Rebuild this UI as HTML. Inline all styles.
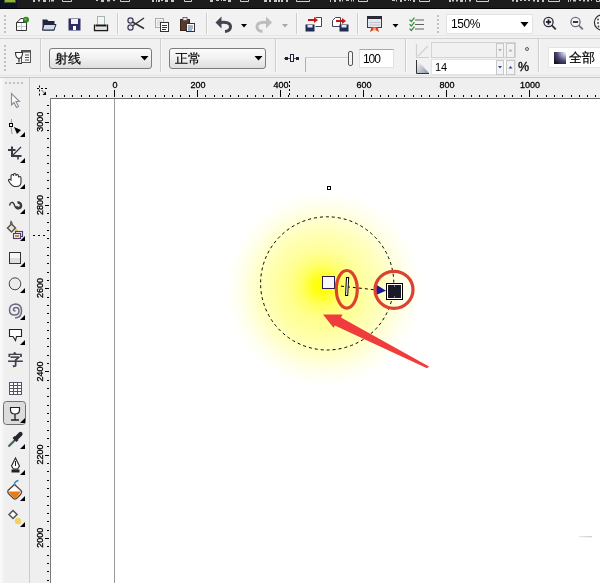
<!DOCTYPE html>
<html><head><meta charset="utf-8"><style>
*{margin:0;padding:0;box-sizing:border-box}
html,body{width:600px;height:583px;overflow:hidden;background:#fff;font-family:"Liberation Sans",sans-serif}
.a{position:absolute}
svg{position:absolute;left:0;top:0}
.a,svg{will-change:transform}
</style></head><body>
<div class="a" style="left:0;top:0;width:600px;height:9px;background:#1c1c1c"></div>
<div class="a" style="left:0;top:9px;width:600px;height:28px;background:#f2f2f2"></div>
<div class="a" style="left:0;top:35px;width:600px;height:1px;background:#e6e6e6"></div>
<div class="a" style="left:0;top:36px;width:600px;height:2px;background:#f1f1f1"></div>
<div class="a" style="left:0;top:38px;width:600px;height:1px;background:#d2d2d2"></div>
<div class="a" style="left:0;top:39px;width:600px;height:38px;background:#f1f1f1"></div>
<div class="a" style="left:0;top:75px;width:600px;height:1px;background:#e4e4e4"></div>
<div class="a" style="left:0;top:77px;width:600px;height:1px;background:#c8c8c8"></div>
<div class="a" style="left:0;top:78px;width:29px;height:505px;background:linear-gradient(90deg,#fbfbfb,#efefef 5px)"></div>
<div class="a" style="left:29px;top:78px;width:1px;height:505px;background:#cbcbcb"></div>
<div class="a" style="left:30px;top:78px;width:570px;height:505px;background:#efefef"></div>
<div class="a" style="left:51px;top:99px;width:549px;height:484px;background:#fff"></div>
<div class="a" style="left:50px;top:98px;width:550px;height:1px;background:#6a6a6a"></div>
<div class="a" style="left:50px;top:98px;width:1px;height:485px;background:#7a7a7a"></div>
<svg width="600" height="9" style="left:0;top:0"><rect x="0" y="0" width="17" height="8" fill="#0e1226"/><rect x="4" y="0" width="12" height="3" fill="#3e5a14"/><rect x="5" y="0" width="10" height="2" fill="#93b43c"/><rect x="33" y="0" width="2" height="2" fill="#c8c8c8"/><rect x="38" y="0" width="2" height="1.5" fill="#c8c8c8"/><rect x="43" y="0" width="3" height="2" fill="#c8c8c8"/><rect x="49" y="0" width="1" height="2" fill="#c8c8c8"/><rect x="51" y="0" width="3" height="1.5" fill="#c8c8c8"/><path d="M62.5,0 V1.5 H71.5 V0" fill="none" stroke="#d0d0d0" stroke-width="1"/><rect x="96" y="0" width="2" height="1" fill="#c8c8c8"/><rect x="101" y="0" width="3" height="2" fill="#c8c8c8"/><rect x="107" y="0" width="3" height="1.5" fill="#c8c8c8"/><rect x="113" y="0" width="2" height="1" fill="#c8c8c8"/><path d="M120.5,0 V1.5 H129.5 V0" fill="none" stroke="#d0d0d0" stroke-width="1"/><rect x="152" y="0" width="2" height="2" fill="#c8c8c8"/><rect x="156" y="0" width="1" height="2" fill="#c8c8c8"/><rect x="158" y="0" width="2" height="2" fill="#c8c8c8"/><rect x="161" y="0" width="2" height="1" fill="#c8c8c8"/><rect x="165" y="0" width="3" height="2" fill="#c8c8c8"/><rect x="171" y="0" width="3" height="2" fill="#c8c8c8"/><path d="M184.5,0 V1.5 H191.5 V0" fill="none" stroke="#d0d0d0" stroke-width="1"/><rect x="210" y="0" width="3" height="2" fill="#c8c8c8"/><rect x="216" y="0" width="3" height="1" fill="#c8c8c8"/><rect x="221" y="0" width="1" height="1" fill="#c8c8c8"/><rect x="223" y="0" width="3" height="1" fill="#c8c8c8"/><rect x="228" y="0" width="3" height="2" fill="#c8c8c8"/><path d="M240.5,0 V1.5 H248.5 V0" fill="none" stroke="#d0d0d0" stroke-width="1"/><rect x="264" y="0" width="3" height="2" fill="#c8c8c8"/><rect x="269" y="0" width="2" height="2" fill="#c8c8c8"/><rect x="274" y="0" width="3" height="2" fill="#c8c8c8"/><rect x="278" y="0" width="2" height="2" fill="#c8c8c8"/><rect x="281" y="0" width="2" height="2" fill="#c8c8c8"/><rect x="286" y="0" width="2" height="2" fill="#c8c8c8"/><path d="M296.5,0 V1.5 H309.5 V0" fill="none" stroke="#d0d0d0" stroke-width="1"/><rect x="330" y="0" width="1" height="2" fill="#c8c8c8"/><rect x="334" y="0" width="2" height="2" fill="#c8c8c8"/><rect x="339" y="0" width="2" height="1.5" fill="#c8c8c8"/><rect x="342" y="0" width="1" height="1.5" fill="#c8c8c8"/><rect x="346" y="0" width="3" height="1" fill="#c8c8c8"/><rect x="351" y="0" width="1" height="1.5" fill="#c8c8c8"/><rect x="353" y="0" width="1" height="1.5" fill="#c8c8c8"/><path d="M358.5,0 V1.5 H367.5 V0" fill="none" stroke="#d0d0d0" stroke-width="1"/><rect x="392" y="0" width="3" height="1" fill="#c8c8c8"/><rect x="396" y="0" width="1" height="1.5" fill="#c8c8c8"/><rect x="400" y="0" width="2" height="2" fill="#c8c8c8"/><rect x="404" y="0" width="2" height="1" fill="#c8c8c8"/><rect x="408" y="0" width="1" height="1" fill="#c8c8c8"/><rect x="410" y="0" width="1" height="1" fill="#c8c8c8"/><rect x="413" y="0" width="2" height="2" fill="#c8c8c8"/><path d="M419.5,0 V1.5 H429.5 V0" fill="none" stroke="#d0d0d0" stroke-width="1"/><rect x="449" y="0" width="2" height="2" fill="#c8c8c8"/><rect x="452" y="0" width="2" height="1.5" fill="#c8c8c8"/><rect x="456" y="0" width="2" height="1.5" fill="#c8c8c8"/><rect x="460" y="0" width="3" height="2" fill="#c8c8c8"/><rect x="465" y="0" width="1" height="2" fill="#c8c8c8"/><rect x="469" y="0" width="2" height="1.5" fill="#c8c8c8"/><path d="M476.5,0 V1.5 H488.5 V0" fill="none" stroke="#d0d0d0" stroke-width="1"/><rect x="512" y="0" width="2" height="1.5" fill="#c8c8c8"/><rect x="516" y="0" width="2" height="2" fill="#c8c8c8"/><rect x="520" y="0" width="2" height="1" fill="#c8c8c8"/><rect x="524" y="0" width="2" height="1" fill="#c8c8c8"/><rect x="528" y="0" width="2" height="1" fill="#c8c8c8"/><rect x="533" y="0" width="2" height="1.5" fill="#c8c8c8"/><rect x="537" y="0" width="2" height="2" fill="#c8c8c8"/><rect x="542" y="0" width="2" height="2" fill="#c8c8c8"/><path d="M548.5,0 V1.5 H559.5 V0" fill="none" stroke="#d0d0d0" stroke-width="1"/><rect x="568" y="0" width="1" height="2" fill="#c8c8c8"/><rect x="570" y="0" width="1" height="1.5" fill="#c8c8c8"/><rect x="573" y="0" width="3" height="1.5" fill="#c8c8c8"/><rect x="579" y="0" width="2" height="1" fill="#c8c8c8"/><rect x="583" y="0" width="2" height="1.5" fill="#c8c8c8"/><rect x="587" y="0" width="2" height="1.5" fill="#c8c8c8"/><rect x="591" y="0" width="1" height="1" fill="#c8c8c8"/><path d="M596.5,0 V1.5 H599.5 V0" fill="none" stroke="#d0d0d0" stroke-width="1"/><rect x="0" y="8" width="600" height="1" fill="#050505"/></svg>
<div class="a" style="left:4px;top:15px;width:2px;height:18px;background:repeating-linear-gradient(#c2c2c2 0 2px,transparent 2px 4px)"></div>
<div class="a" style="left:4px;top:45px;width:2px;height:26px;background:repeating-linear-gradient(#c2c2c2 0 2px,transparent 2px 4px)"></div>
<div class="a" style="left:437px;top:15px;width:2px;height:18px;background:repeating-linear-gradient(#c2c2c2 0 2px,transparent 2px 4px)"></div>
<div class="a" style="left:5px;top:82px;width:20px;height:2px;background:repeating-linear-gradient(90deg,#c2c2c2 0 2px,transparent 2px 4px)"></div>
<div class="a" style="left:117px;top:13px;width:1px;height:21px;background:#cdcdcd"></div>
<div class="a" style="left:118px;top:13px;width:1px;height:21px;background:#fbfbfb"></div>
<div class="a" style="left:206px;top:13px;width:1px;height:21px;background:#cdcdcd"></div>
<div class="a" style="left:207px;top:13px;width:1px;height:21px;background:#fbfbfb"></div>
<div class="a" style="left:296px;top:13px;width:1px;height:21px;background:#cdcdcd"></div>
<div class="a" style="left:297px;top:13px;width:1px;height:21px;background:#fbfbfb"></div>
<div class="a" style="left:357px;top:13px;width:1px;height:21px;background:#cdcdcd"></div>
<div class="a" style="left:358px;top:13px;width:1px;height:21px;background:#fbfbfb"></div>
<div class="a" style="left:40px;top:39px;width:1px;height:33px;background:#cdcdcd"></div>
<div class="a" style="left:41px;top:39px;width:1px;height:33px;background:#fbfbfb"></div>
<div class="a" style="left:160px;top:39px;width:1px;height:33px;background:#cdcdcd"></div>
<div class="a" style="left:161px;top:39px;width:1px;height:33px;background:#fbfbfb"></div>
<div class="a" style="left:275px;top:39px;width:1px;height:33px;background:#cdcdcd"></div>
<div class="a" style="left:276px;top:39px;width:1px;height:33px;background:#fbfbfb"></div>
<div class="a" style="left:405px;top:39px;width:1px;height:33px;background:#cdcdcd"></div>
<div class="a" style="left:406px;top:39px;width:1px;height:33px;background:#fbfbfb"></div>
<div class="a" style="left:538px;top:39px;width:1px;height:33px;background:#cdcdcd"></div>
<div class="a" style="left:539px;top:39px;width:1px;height:33px;background:#fbfbfb"></div>
<svg width="600" height="40" style="left:0;top:0"><path d="M16.5,22.5 L21,18.5 L23.5,18.5 L23.5,22.5 M16.5,22.5 H26.5 V30.5 H16.5 Z" fill="#fbfbff" stroke="#333" stroke-width="1"/><path d="M17,26.5 H26 M21.5,23 V30" stroke="#c8c8d0" stroke-width="1"/><circle cx="26" cy="19.8" r="3" fill="#2e8a1c"/><circle cx="25.5" cy="19.3" r="1.2" fill="#5cb83c"/><path d="M42.5,19.5 H47 L48.5,21 H54.5 V30.5 H42.5 Z" fill="#1e2640"/><path d="M44,24.5 H56 L54,30 H42.5 Z" fill="#d6dcea" stroke="#1e2640" stroke-width="1"/><rect x="68.5" y="18.5" width="12" height="12" fill="#2c2c6a"/><rect x="71" y="19" width="7" height="5" fill="#f0f0f6"/><rect x="73" y="26" width="3" height="4" fill="#fff"/><rect x="97.5" y="16.5" width="7" height="9" fill="#f2f6f6" stroke="#a8b4b4" stroke-width="1"/><path d="M94.5,24.5 V30.5 H107.5 V24.5" fill="none" stroke="#1a1a1a" stroke-width="1.3"/><rect x="95.5" y="24.5" width="11" height="2" fill="#1a1a1a"/><rect x="95.5" y="27.5" width="11" height="2.3" fill="#e0e0e0"/><circle cx="130.5" cy="20.5" r="2.6" fill="#e6e6ee" stroke="#3b3b55" stroke-width="1.2"/><circle cx="130.5" cy="27.5" r="2.6" fill="#e6e6ee" stroke="#3b3b55" stroke-width="1.2"/><path d="M132.5,22 L144,28.5 M132.5,26 L144,18" stroke="#333" stroke-width="1.5"/><rect x="155.5" y="18.5" width="8" height="9" fill="#f6f6f6" stroke="#aab" stroke-width="1"/><path d="M157,21 H162 M157,23 H162 M157,25 H162" stroke="#c8c8d0" stroke-width="1"/><rect x="160.5" y="22.5" width="8" height="9" fill="#fff" stroke="#333" stroke-width="1"/><path d="M162,25.5 H167 M162,27.5 H167 M162,29.5 H166" stroke="#334" stroke-width="1"/><rect x="180.5" y="19.5" width="9" height="11" fill="#5a3a28" stroke="#3a2418" stroke-width="1"/><rect x="183" y="17.5" width="4" height="3" fill="#e8e8e8" stroke="#555" stroke-width="0.8"/><rect x="186.5" y="23.5" width="8" height="8" fill="#fff" stroke="#333" stroke-width="1"/><path d="M188,26 H193 M188,28 H193 M188,30 H192" stroke="#4a6aa0" stroke-width="1"/><path d="M221.5,16.5 L215.5,22.5 L221.5,28.5 Z" fill="#44444e"/><path d="M220,22.5 C226,21.5 230.5,23 230.5,26.5 C230.5,29.5 228,31.2 225,31.5" fill="none" stroke="#44444e" stroke-width="3"/><polygon points="241,24 247,24 244,27.5" fill="#000"/><path d="M266,16.5 L272,22.5 L266,28.5 Z" fill="#bdbdbd"/><path d="M267.5,22.5 C261.5,21.5 257,23 257,26.5 C257,29.5 259.5,31.2 262.5,31.5" fill="none" stroke="#bdbdbd" stroke-width="3"/><polygon points="282,24 288,24 285,27.5" fill="#a8a8a8"/><path d="M315.5,17.5 H321.5 V26.5 H315.5" fill="#fff" stroke="#445" stroke-width="1"/><path d="M308,20 H316" stroke="#c81818" stroke-width="2"/><polygon points="314,17 318,20 314,23" fill="#c81818"/><rect x="305.5" y="24.5" width="9" height="7" fill="#1e2d55"/><rect x="307.5" y="25" width="5" height="2.5" fill="#e8e8f0"/><path d="M332.5,20.5 L335.5,17.5 H340.5 V26.5 H332.5 Z" fill="#fff" stroke="#445" stroke-width="1"/><path d="M336,21 H344" stroke="#c81818" stroke-width="2"/><polygon points="342,18 346,21 342,24" fill="#c81818"/><rect x="339.5" y="24.5" width="9" height="7" fill="#1e2d55"/><rect x="341.5" y="25" width="5" height="2.5" fill="#e8e8f0"/><rect x="367.5" y="16.5" width="14" height="11" fill="#e6e8f0" stroke="#3a3a48" stroke-width="1"/><rect x="367" y="16" width="15" height="3" fill="#2a2a38"/><path d="M369,22.5 H380 M369,25 H380" stroke="#c0c4d0" stroke-width="1"/><path d="M370,32 L371.5,27 H377.5 L379,32 L374.5,29.5 Z" fill="#e03a20"/><circle cx="374.5" cy="29" r="1.4" fill="#ffb040"/><polygon points="392.5,24 398.5,24 395.5,27.5" fill="#000"/><path d="M409.5,19.7 L411.3,21.5 L414.5,17.7" fill="none" stroke="#3c8c3c" stroke-width="1.2"/><rect x="415" y="19.5" width="9" height="1" fill="#606060"/><path d="M409.5,24.2 L411.3,26.0 L414.5,22.2" fill="none" stroke="#3c8c3c" stroke-width="1.2"/><rect x="415" y="24.0" width="9" height="1" fill="#606060"/><path d="M409.5,28.7 L411.3,30.5 L414.5,26.7" fill="none" stroke="#3c8c3c" stroke-width="1.2"/><rect x="415" y="28.5" width="9" height="1" fill="#606060"/></svg>
<div class="a" style="left:446px;top:14px;width:87px;height:20px;background:#fff;border:1px solid #e2e2e2"></div>
<div class="a" style="left:451px;top:17px;font-size:12px;line-height:15px;color:#000;letter-spacing:-0.4px">150%</div>
<svg width="600" height="40" style="left:0;top:0"><polygon points="520.5,22 528.5,22 524.5,27" fill="#000"/><circle cx="548.5" cy="22" r="4.6" fill="#f4f6fb" stroke="#2a2a38" stroke-width="1.3"/><path d="M551.8,25.3 L555.8,29.3" stroke="#2a2a38" stroke-width="1.8"/><path d="M545.9,22 H551.1" stroke="#222" stroke-width="1.8"/><path d="M548.5,19.4 V24.6" stroke="#222" stroke-width="1.8"/><circle cx="575.5" cy="22" r="4.6" fill="#f4f6fb" stroke="#6e6e7c" stroke-width="1.3"/><path d="M578.8,25.3 L582.8,29.3" stroke="#6e6e7c" stroke-width="1.8"/><path d="M572.9,22 H578.1" stroke="#222" stroke-width="1.8"/><circle cx="602" cy="22.5" r="7.6" fill="#f6f6f6" stroke="#333" stroke-width="1.2"/><circle cx="598" cy="19.5" r="0.9" fill="#444"/><circle cx="598" cy="23" r="0.9" fill="#444"/><circle cx="598.5" cy="26.5" r="0.9" fill="#444"/></svg>
<svg width="600" height="80" style="left:0;top:0"><rect x="21.5" y="50.5" width="9" height="12" fill="#f4f4f8" stroke="#555" stroke-width="1"/><rect x="21.5" y="50.5" width="9" height="2" fill="#555"/><path d="M25,55 H29 M25,57.5 H29 M25,60 H29" stroke="#555" stroke-width="1"/><path d="M15.5,52.5 Q15.5,58 19,58.5 Q22.5,58 22.5,52.5 Z" fill="#fff" stroke="#333" stroke-width="1.1"/><path d="M19,58.5 V62.5 M16,63.5 H22" stroke="#333" stroke-width="1.2"/></svg>
<div class="a" style="left:49px;top:48px;width:103px;height:21px;border:1px solid #7c7c7c;border-radius:3px;background:linear-gradient(#fbfbfb,#f2f2f2 45%,#dedede)"></div>
<div class="a" style="left:55px;top:50px;font-size:13px;line-height:17px;color:#000;-webkit-text-stroke:0.2px #000">射线</div>
<svg width="10" height="6" style="left:140px;top:56px"><polygon points="0.5,0 8.5,0 4.5,4.5" fill="#000"/></svg>
<div class="a" style="left:169px;top:48px;width:97px;height:21px;border:1px solid #7c7c7c;border-radius:3px;background:linear-gradient(#fbfbfb,#f2f2f2 45%,#dedede)"></div>
<div class="a" style="left:175px;top:50px;font-size:13px;line-height:17px;color:#000;-webkit-text-stroke:0.2px #000">正常</div>
<svg width="10" height="6" style="left:254px;top:56px"><polygon points="0.5,0 8.5,0 4.5,4.5" fill="#000"/></svg>
<svg width="600" height="80" style="left:0;top:0"><path d="M284,58.5 H299" stroke="#555" stroke-width="1"/><rect x="285" y="57" width="3" height="3" fill="#223"/><rect x="290.5" y="54.5" width="3" height="7" fill="#f4f4ff" stroke="#223" stroke-width="1"/><rect x="296" y="57" width="3" height="3" fill="#223"/><path d="M305.5,57.5 H350" stroke="#999" stroke-width="1"/><path d="M306,58 H350" stroke="#fff" stroke-width="1"/><path d="M305.5,58 V72" stroke="#b0b0b0" stroke-width="1"/><rect x="348.5" y="51.5" width="4" height="14" rx="1.5" fill="#f4f4f4" stroke="#555" stroke-width="1"/></svg>
<div class="a" style="left:359px;top:49px;width:35px;height:19px;background:#fff;border:1px solid #e2e2e2;border-top-color:#a8a8a8"></div>
<div class="a" style="left:363px;top:52px;font-size:12px;line-height:15px;color:#000;letter-spacing:-1.1px">100</div>
<div class="a" style="left:431px;top:42px;width:85px;height:16px;background:#f1f1f1;border:1px solid #d4d4d4"></div>
<div class="a" style="left:431px;top:59px;width:85px;height:16px;background:#fff;border:1px solid #e4e4e4"></div>
<div class="a" style="left:435px;top:61px;font-size:11px;line-height:13px;color:#000">14</div>
<svg width="600" height="80" style="left:0;top:0"><rect x="496.5" y="43.5" width="7" height="14" fill="#f2f2f2" stroke="#c8c8c8" stroke-width="1"/><rect x="506.5" y="43.5" width="8" height="14" fill="#f2f2f2" stroke="#c8c8c8" stroke-width="1"/><polygon points="498,49 502,49 500,51.5" fill="#b0b0b0"/><polygon points="508.5,51.5 512.5,51.5 510.5,49" fill="#b0b0b0"/><rect x="496.5" y="60.5" width="7" height="14" fill="#f2f4f6" stroke="#c8c8c8" stroke-width="1"/><rect x="506.5" y="60.5" width="8" height="14" fill="#f2f4f6" stroke="#c8c8c8" stroke-width="1"/><polygon points="498,66 502,66 500,68.5" fill="#2a4a88"/><polygon points="508.5,68.5 512.5,68.5 510.5,66" fill="#2a4a88"/><path d="M416.5,44 V57.5 H429" fill="none" stroke="#d0d0d0" stroke-width="1.2"/><path d="M418,56 L428,46" stroke="#d0d0d0" stroke-width="1.2"/><defs><linearGradient id="ep" x1="0" y1="0" x2="1" y2="1"><stop offset="0" stop-color="#ffffff"/><stop offset="1" stop-color="#8890a8"/></linearGradient></defs><path d="M417,60 V73 H429 Z" fill="url(#ep)"/><path d="M416.5,60 V73.5 H429" fill="none" stroke="#333" stroke-width="1"/><circle cx="527" cy="49" r="1.5" fill="none" stroke="#333" stroke-width="0.8"/></svg>
<div class="a" style="left:518px;top:61px;font-size:12.5px;line-height:13px;color:#000;-webkit-text-stroke:0.3px #000">%</div>
<div class="a" style="left:548px;top:47px;width:60px;height:21px;background:#fff;border:1px solid #e4e4e4"></div>
<svg width="14" height="14" style="left:553px;top:51px"><defs><radialGradient id="gb" cx="1" cy="0" r="1.25"><stop offset="0" stop-color="#ffffff"/><stop offset="0.3" stop-color="#a8a8d0"/><stop offset="0.62" stop-color="#4a4870"/><stop offset="1" stop-color="#14121e"/></radialGradient></defs><rect x="1" y="1" width="12" height="12" fill="url(#gb)"/></svg>
<div class="a" style="left:569px;top:49px;font-size:13px;line-height:17px;color:#000;-webkit-text-stroke:0.2px #000">全部</div>
<svg width="30" height="583" style="left:0;top:0"><rect x="3.5" y="401.5" width="22" height="23" rx="3" fill="#dcdcdc" stroke="#6e6e6e" stroke-width="1"/><path d="M11.5,93.5 L11.5,105 L14,102.5 L16.5,107.5 L18.5,106.5 L16,101.5 L19.5,101.5 Z" fill="#fafafa" stroke="#8a8a96" stroke-width="1.1"/><path d="M11.5,119 Q10.5,128 12,134" fill="none" stroke="#999" stroke-width="1"/><rect x="9.5" y="123.5" width="3" height="3" fill="#fff" stroke="#000" stroke-width="1"/><polygon points="14,127 21,130 17,134" fill="#000"/><polygon points="25,132 25,137 20,137" fill="#000"/><path d="M8,150 H15.5" stroke="#3a3a46" stroke-width="2"/><path d="M12,146.5 V156 H21.5" fill="none" stroke="#3a3a46" stroke-width="2"/><path d="M18,156 V159.5" stroke="#3a3a46" stroke-width="1.6"/><path d="M12.5,155.5 L21,147" stroke="#3a3a46" stroke-width="1.3"/><polygon points="25,158 25,163 20,163" fill="#000"/><path d="M11,180 V176 Q11,174.5 12.3,174.5 Q13.5,174.5 13.5,176 V175 Q13.5,173.5 14.8,173.5 Q16,173.5 16,175 V176 Q16,174.5 17.3,174.5 Q18.5,174.5 18.5,176 V177.5 Q18.5,176.5 19.7,176.5 Q21,176.5 21,178 V182 Q21,186.5 16.5,186.5 H14.5 Q12.5,186.5 10,183 L8.5,180.5 Q8.5,179 10,179.5 Z" fill="#fff" stroke="#333" stroke-width="1.1"/><polygon points="25,184 25,189 20,189" fill="#000"/><path d="M9.5,205.5 C10.5,201.5 13,201.5 14.2,204.5 C15.2,207.5 16.5,209 18.5,208.8" fill="none" stroke="#3a3a44" stroke-width="1.5"/><path d="M16,206.5 C17.5,209 21,208.5 21,205.5 C21,203 19,202.2 17.5,202.8" fill="none" stroke="#3a3a44" stroke-width="2.6"/><polygon points="25,209 25,214 20,214" fill="#000"/><path d="M7.5,228 L11.5,224 L15.5,228 L11.5,232 Z" fill="#e6e6de" stroke="#58544c" stroke-width="1.5"/><path d="M10.5,224 L11,221.5 L12.5,223.5" fill="none" stroke="#58544c" stroke-width="1.2"/><circle cx="16.5" cy="230.5" r="1.6" fill="#f0c060"/><rect x="15.5" y="231.5" width="7" height="5" fill="none" stroke="#4a4070" stroke-width="1.1"/><rect x="13.5" y="233.5" width="7" height="5" fill="#f4ece0" stroke="#4a4070" stroke-width="1.1"/><rect x="15" y="235" width="4" height="2" fill="#c88850"/><polygon points="25,236 25,241 20,241" fill="#000"/><rect x="9.5" y="252.5" width="11" height="11" fill="#f6f6f6" stroke="#333" stroke-width="1"/><rect x="10" y="258" width="10" height="5" fill="#dedede"/><polygon points="25,262 25,267 20,267" fill="#000"/><ellipse cx="15" cy="283.8" rx="5.8" ry="6" fill="#ececec" stroke="#444" stroke-width="1"/><polygon points="25,288 25,293 20,293" fill="#000"/><path d="M15.5,311 Q13.5,311 13.5,309.5 Q13.5,307.5 16,307.5 Q19,307.5 19,311 Q19,315 14.5,315 Q9.5,315 9.5,310 Q9.5,304.5 15.5,304 Q21.5,304 21.5,311 Q21.5,317.5 15,318" fill="none" stroke="#6a6a80" stroke-width="1.5"/><polygon points="25,315 25,320 20,320" fill="#000"/><path d="M9.5,329.5 H21.5 V336.5 H16.5 L15.5,340.5 L13,336.5 H9.5 Z" fill="#fff" stroke="#222" stroke-width="1.1"/><polygon points="25,340 25,345 20,345" fill="#000"/><rect x="9.5" y="382.5" width="12" height="12" fill="#fff" stroke="#555568" stroke-width="1"/><path d="M9.5,385.5 H21.5 M9.5,388.5 H21.5 M9.5,391.5 H21.5 M13.5,382.5 V394.5 M17.5,382.5 V394.5" stroke="#555568" stroke-width="1"/><path d="M10.5,407.5 H19.5 V410 Q19.5,414 15,414 Q10.5,414 10.5,410 Z" fill="#fff" stroke="#222" stroke-width="1.2"/><path d="M15,414 V419.5 M11,420 H19" stroke="#222" stroke-width="1.3"/><polygon points="25,418 25,423 20,423" fill="#000"/><path d="M8.5,446.5 L15.5,439.5" stroke="#4a7a6a" stroke-width="2.4"/><path d="M8.5,446.5 L15.5,439.5" stroke="#2a3a38" stroke-width="0.8" opacity="0.6"/><path d="M13.5,437 L17.5,441" stroke="#26262e" stroke-width="2.6"/><path d="M16,438.5 L20.5,434" stroke="#26262e" stroke-width="4.2" stroke-linecap="round"/><polygon points="25,444 25,449 20,449" fill="#000"/><path d="M15.5,458 L11.5,466 L13.5,469 H17.5 L19.5,466 Z" fill="#fff" stroke="#222" stroke-width="1.1"/><path d="M15.5,461 V466" stroke="#222" stroke-width="1"/><rect x="11.5" y="469.5" width="8" height="3" fill="#222"/><polygon points="25,470 25,475 20,475" fill="#000"/><path d="M8,490.5 L14.5,484.5 L21.5,491 Q22,493 20.5,494.5 L16.5,498.5 Q15,499.5 13.5,498.5 L8.5,493.5 Q7.3,492 8,490.5 Z" fill="#fff" stroke="#5a4030" stroke-width="1.3"/><path d="M8.3,491.5 H21 L16.3,497.8 Q15,498.8 13.7,497.8 Z" fill="#e87a18"/><path d="M14,485 Q15,481 18.5,480.5" fill="none" stroke="#3a8ab0" stroke-width="1.3"/><polygon points="25,496 25,501 20,501" fill="#000"/><path d="M9,514.5 L13,510.5 L17,514.5 L13,518.5 Z" fill="#fff" stroke="#5a5050" stroke-width="1.5"/><circle cx="18" cy="521" r="3.2" fill="#f0d060"/><polygon points="25,522 25,527 20,527" fill="#000"/></svg>
<div class="a" style="left:8px;top:351px;font-size:15px;line-height:18px;color:#3a3a44;-webkit-text-stroke:0.6px #3a3a44">字</div>
<svg width="600" height="583" style="left:0;top:0"><rect x="56" y="95" width="1" height="2" fill="#000"/><rect x="64" y="95" width="1" height="2" fill="#000"/><rect x="72" y="95" width="1" height="2" fill="#000"/><rect x="81" y="95" width="1" height="2" fill="#000"/><rect x="89" y="95" width="1" height="2" fill="#000"/><rect x="97" y="95" width="1" height="2" fill="#000"/><rect x="106" y="95" width="1" height="2" fill="#000"/><rect x="114" y="90" width="1" height="7" fill="#000"/><text x="115.0" y="88.2" font-size="9" text-anchor="middle" fill="#000" stroke="#000" stroke-width="0.3" font-family="Liberation Sans">0</text><rect x="122" y="95" width="1" height="2" fill="#000"/><rect x="131" y="95" width="1" height="2" fill="#000"/><rect x="139" y="95" width="1" height="2" fill="#000"/><rect x="147" y="95" width="1" height="2" fill="#000"/><rect x="155" y="95" width="1" height="2" fill="#000"/><rect x="164" y="95" width="1" height="2" fill="#000"/><rect x="172" y="95" width="1" height="2" fill="#000"/><rect x="180" y="95" width="1" height="2" fill="#000"/><rect x="189" y="95" width="1" height="2" fill="#000"/><rect x="197" y="90" width="1" height="7" fill="#000"/><text x="198.0" y="88.2" font-size="9" text-anchor="middle" fill="#000" stroke="#000" stroke-width="0.3" font-family="Liberation Sans">200</text><rect x="205" y="95" width="1" height="2" fill="#000"/><rect x="214" y="95" width="1" height="2" fill="#000"/><rect x="222" y="95" width="1" height="2" fill="#000"/><rect x="230" y="95" width="1" height="2" fill="#000"/><rect x="238" y="95" width="1" height="2" fill="#000"/><rect x="247" y="95" width="1" height="2" fill="#000"/><rect x="255" y="95" width="1" height="2" fill="#000"/><rect x="263" y="95" width="1" height="2" fill="#000"/><rect x="272" y="95" width="1" height="2" fill="#000"/><rect x="280" y="90" width="1" height="7" fill="#000"/><text x="281.0" y="88.2" font-size="9" text-anchor="middle" fill="#000" stroke="#000" stroke-width="0.3" font-family="Liberation Sans">400</text><rect x="288" y="95" width="1" height="2" fill="#000"/><rect x="297" y="95" width="1" height="2" fill="#000"/><rect x="305" y="95" width="1" height="2" fill="#000"/><rect x="313" y="95" width="1" height="2" fill="#000"/><rect x="321" y="95" width="1" height="2" fill="#000"/><rect x="330" y="95" width="1" height="2" fill="#000"/><rect x="338" y="95" width="1" height="2" fill="#000"/><rect x="346" y="95" width="1" height="2" fill="#000"/><rect x="355" y="95" width="1" height="2" fill="#000"/><rect x="363" y="90" width="1" height="7" fill="#000"/><text x="364.1" y="88.2" font-size="9" text-anchor="middle" fill="#000" stroke="#000" stroke-width="0.3" font-family="Liberation Sans">600</text><rect x="371" y="95" width="1" height="2" fill="#000"/><rect x="380" y="95" width="1" height="2" fill="#000"/><rect x="388" y="95" width="1" height="2" fill="#000"/><rect x="396" y="95" width="1" height="2" fill="#000"/><rect x="404" y="95" width="1" height="2" fill="#000"/><rect x="413" y="95" width="1" height="2" fill="#000"/><rect x="421" y="95" width="1" height="2" fill="#000"/><rect x="429" y="95" width="1" height="2" fill="#000"/><rect x="438" y="95" width="1" height="2" fill="#000"/><rect x="446" y="90" width="1" height="7" fill="#000"/><text x="447.1" y="88.2" font-size="9" text-anchor="middle" fill="#000" stroke="#000" stroke-width="0.3" font-family="Liberation Sans">800</text><rect x="454" y="95" width="1" height="2" fill="#000"/><rect x="463" y="95" width="1" height="2" fill="#000"/><rect x="471" y="95" width="1" height="2" fill="#000"/><rect x="479" y="95" width="1" height="2" fill="#000"/><rect x="487" y="95" width="1" height="2" fill="#000"/><rect x="496" y="95" width="1" height="2" fill="#000"/><rect x="504" y="95" width="1" height="2" fill="#000"/><rect x="512" y="95" width="1" height="2" fill="#000"/><rect x="521" y="95" width="1" height="2" fill="#000"/><rect x="529" y="90" width="1" height="7" fill="#000"/><text x="530.1" y="88.2" font-size="9" text-anchor="middle" fill="#000" stroke="#000" stroke-width="0.3" font-family="Liberation Sans">1000</text><rect x="537" y="95" width="1" height="2" fill="#000"/><rect x="546" y="95" width="1" height="2" fill="#000"/><rect x="554" y="95" width="1" height="2" fill="#000"/><rect x="562" y="95" width="1" height="2" fill="#000"/><rect x="571" y="95" width="1" height="2" fill="#000"/><rect x="579" y="95" width="1" height="2" fill="#000"/><rect x="587" y="95" width="1" height="2" fill="#000"/><rect x="595" y="95" width="1" height="2" fill="#000"/><rect x="47" y="105" width="2" height="1" fill="#000"/><rect x="47" y="113" width="2" height="1" fill="#000"/><rect x="45" y="122" width="4" height="1" fill="#000"/><text transform="translate(43.3,121.7) rotate(-90)" font-size="9" text-anchor="middle" fill="#000" stroke="#000" stroke-width="0.3" font-family="Liberation Sans">3000</text><rect x="47" y="130" width="2" height="1" fill="#000"/><rect x="47" y="138" width="2" height="1" fill="#000"/><rect x="47" y="147" width="2" height="1" fill="#000"/><rect x="47" y="155" width="2" height="1" fill="#000"/><rect x="47" y="163" width="2" height="1" fill="#000"/><rect x="47" y="172" width="2" height="1" fill="#000"/><rect x="47" y="180" width="2" height="1" fill="#000"/><rect x="47" y="188" width="2" height="1" fill="#000"/><rect x="47" y="197" width="2" height="1" fill="#000"/><rect x="45" y="205" width="4" height="1" fill="#000"/><text transform="translate(43.3,204.9) rotate(-90)" font-size="9" text-anchor="middle" fill="#000" stroke="#000" stroke-width="0.3" font-family="Liberation Sans">2800</text><rect x="47" y="213" width="2" height="1" fill="#000"/><rect x="47" y="222" width="2" height="1" fill="#000"/><rect x="47" y="230" width="2" height="1" fill="#000"/><rect x="47" y="238" width="2" height="1" fill="#000"/><rect x="47" y="247" width="2" height="1" fill="#000"/><rect x="47" y="255" width="2" height="1" fill="#000"/><rect x="47" y="263" width="2" height="1" fill="#000"/><rect x="47" y="272" width="2" height="1" fill="#000"/><rect x="47" y="280" width="2" height="1" fill="#000"/><rect x="45" y="288" width="4" height="1" fill="#000"/><text transform="translate(43.3,288.1) rotate(-90)" font-size="9" text-anchor="middle" fill="#000" stroke="#000" stroke-width="0.3" font-family="Liberation Sans">2600</text><rect x="47" y="297" width="2" height="1" fill="#000"/><rect x="47" y="305" width="2" height="1" fill="#000"/><rect x="47" y="313" width="2" height="1" fill="#000"/><rect x="47" y="322" width="2" height="1" fill="#000"/><rect x="47" y="330" width="2" height="1" fill="#000"/><rect x="47" y="338" width="2" height="1" fill="#000"/><rect x="47" y="346" width="2" height="1" fill="#000"/><rect x="47" y="355" width="2" height="1" fill="#000"/><rect x="47" y="363" width="2" height="1" fill="#000"/><rect x="45" y="371" width="4" height="1" fill="#000"/><text transform="translate(43.3,371.4) rotate(-90)" font-size="9" text-anchor="middle" fill="#000" stroke="#000" stroke-width="0.3" font-family="Liberation Sans">2400</text><rect x="47" y="380" width="2" height="1" fill="#000"/><rect x="47" y="388" width="2" height="1" fill="#000"/><rect x="47" y="396" width="2" height="1" fill="#000"/><rect x="47" y="405" width="2" height="1" fill="#000"/><rect x="47" y="413" width="2" height="1" fill="#000"/><rect x="47" y="421" width="2" height="1" fill="#000"/><rect x="47" y="430" width="2" height="1" fill="#000"/><rect x="47" y="438" width="2" height="1" fill="#000"/><rect x="47" y="446" width="2" height="1" fill="#000"/><rect x="45" y="455" width="4" height="1" fill="#000"/><text transform="translate(43.3,454.6) rotate(-90)" font-size="9" text-anchor="middle" fill="#000" stroke="#000" stroke-width="0.3" font-family="Liberation Sans">2200</text><rect x="47" y="463" width="2" height="1" fill="#000"/><rect x="47" y="471" width="2" height="1" fill="#000"/><rect x="47" y="480" width="2" height="1" fill="#000"/><rect x="47" y="488" width="2" height="1" fill="#000"/><rect x="47" y="496" width="2" height="1" fill="#000"/><rect x="47" y="505" width="2" height="1" fill="#000"/><rect x="47" y="513" width="2" height="1" fill="#000"/><rect x="47" y="521" width="2" height="1" fill="#000"/><rect x="47" y="530" width="2" height="1" fill="#000"/><rect x="45" y="538" width="4" height="1" fill="#000"/><text transform="translate(43.3,537.8) rotate(-90)" font-size="9" text-anchor="middle" fill="#000" stroke="#000" stroke-width="0.3" font-family="Liberation Sans">2000</text><rect x="47" y="546" width="2" height="1" fill="#000"/><rect x="47" y="555" width="2" height="1" fill="#000"/><rect x="47" y="563" width="2" height="1" fill="#000"/><rect x="47" y="571" width="2" height="1" fill="#000"/><rect x="47" y="580" width="2" height="1" fill="#000"/><path d="M37,88.5 H47" stroke="#000" stroke-width="1" stroke-dasharray="2 2"/><path d="M39.5,85.5 V96" stroke="#000" stroke-width="1" stroke-dasharray="2 2"/><path d="M41.5,90 L45,93.5" stroke="#000" stroke-width="0.9" stroke-dasharray="1 0.6"/><polygon points="46,91.5 46,95 42.5,95" fill="#000"/><path d="M289.5,81 V97" stroke="#000" stroke-width="1" stroke-dasharray="2 2"/><path d="M33,235.5 H47" stroke="#000" stroke-width="1" stroke-dasharray="2 3"/></svg>
<div class="a" style="left:114px;top:99px;width:1px;height:484px;background:#9a9a9a"></div>
<svg width="600" height="583" style="left:0;top:0"><defs><linearGradient id="fl" x1="0" x2="1"><stop offset="0" stop-color="#e8e8e8"/><stop offset="1" stop-color="#cccccc"/></linearGradient></defs><rect x="579" y="536" width="13" height="1.3" fill="url(#fl)"/><defs><radialGradient id="yh" gradientUnits="userSpaceOnUse" cx="324" cy="289" r="97" fx="318" fy="290"><stop offset="0" stop-color="#ffff78"/><stop offset="0.4" stop-color="#ffff9a"/><stop offset="0.66" stop-color="#ffffc4"/><stop offset="0.85" stop-color="#ffffec"/><stop offset="1" stop-color="#ffffff"/></radialGradient><radialGradient id="yc" gradientUnits="userSpaceOnUse" cx="322" cy="286" r="36"><stop offset="0" stop-color="#ffff00" stop-opacity="1"/><stop offset="0.25" stop-color="#ffff00" stop-opacity="0.8"/><stop offset="0.6" stop-color="#ffff20" stop-opacity="0.3"/><stop offset="1" stop-color="#ffff40" stop-opacity="0"/></radialGradient></defs><circle cx="324" cy="289" r="97" fill="url(#yh)"/><circle cx="322" cy="286" r="36" fill="url(#yc)"/><circle cx="327.2" cy="283.4" r="66.6" fill="none" stroke="#000" stroke-width="1" stroke-dasharray="3 3"/><rect x="327.5" y="186.5" width="3" height="3" fill="#fff" stroke="#000" stroke-width="1"/><line x1="335" y1="285.5" x2="377" y2="290" stroke="#000" stroke-width="1" stroke-dasharray="3 3"/><rect x="322.5" y="276.5" width="12" height="12" fill="#f8f8ff" stroke="#2a2050" stroke-width="1"/><rect x="346" y="277.5" width="2.2" height="18" fill="#fffff4" stroke="#000" stroke-width="1" transform="rotate(3 347.1 286.5)"/><polygon points="376,284.5 386,290.8 376,295" fill="#1818a0"/><rect x="386.5" y="283.5" width="16" height="16" fill="#fff" stroke="#000" stroke-width="1"/><rect x="388" y="285" width="13" height="13" fill="#1a1a28"/><rect x="394.3" y="285" width="0.8" height="2" fill="#8a8a98"/><rect x="394" y="296" width="0.8" height="2" fill="#8a8a98"/><ellipse cx="346.8" cy="289.3" rx="10.5" ry="18.8" fill="none" stroke="#d9432f" stroke-width="3.2"/><ellipse cx="394" cy="289.8" rx="19" ry="18.5" fill="none" stroke="#d9432f" stroke-width="3.2"/><polygon points="323,314.6 342.5,314.4 341,317.6 429,366.4 427,368.2 334.8,325.6 333.5,327.8" fill="#f03c3c"/></svg>
</body></html>
